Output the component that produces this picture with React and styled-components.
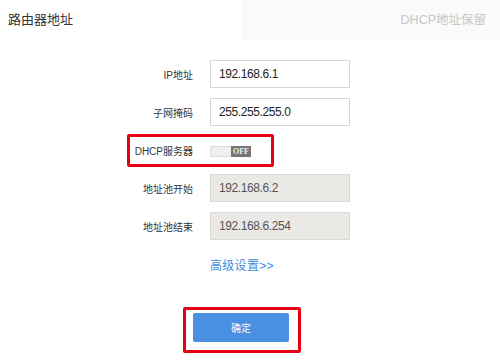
import React from 'react';
import styled, { createGlobalStyle } from 'styled-components';

const GlobalStyle = createGlobalStyle`
  html, body {
    margin: 0;
    padding: 0;
    background: #fff;
  }
  body {
    font-family: "Liberation Sans", "Noto Sans CJK SC", sans-serif;
    color: #333;
  }
`;

const Page = styled.div`
  width: 500px;
  height: 361px;
  overflow: hidden;
`;

const Header = styled.div`
  display: flex;
  height: 40px;
`;

const Title = styled.div`
  width: 241px;
  padding-left: 8px;
  box-sizing: border-box;
  font-size: 13px;
  line-height: 40px;
  color: #333;
`;

const Tab = styled.div`
  flex: 1;
  background: #fafafa;
  text-align: right;
  padding-right: 14px;
  font-size: 12.5px;
  line-height: 40px;
  color: #c6c6c6;
`;

const Form = styled.div`
  padding-top: 20px;
`;

const Row = styled.div`
  position: relative;
  display: grid;
  grid-template-columns: 193px 140px;
  column-gap: 17px;
  align-items: center;
  height: 28px;
  margin-bottom: 10px;
`;

const Label = styled.label`
  text-align: right;
  font-size: 10px;
  color: #333;
`;

const Field = styled.input`
  box-sizing: border-box;
  width: 140px;
  height: 28px;
  margin: 0;
  padding: 0 0 0 8px;
  border: 1px solid ${(p) => (p.disabled ? '#d9d9d6' : '#d6d6d6')};
  border-radius: 0;
  background: ${(p) => (p.disabled ? '#ebe9e5' : '#fff')};
  font-family: "Liberation Sans", sans-serif;
  font-size: 12px;
  letter-spacing: -0.4px;
  color: ${(p) => (p.disabled ? '#555' : '#222')};
  -webkit-text-fill-color: ${(p) => (p.disabled ? '#555' : '#222')};
  opacity: 1;
  outline: none;
`;

const Toggle = styled.div`
  display: flex;
  width: 41px;
  height: 11px;
  margin-top: 2px;
`;

const ToggleOff = styled.span`
  flex: 1;
  box-sizing: border-box;
  background: #efefef;
  border: 1px solid #dcdcdc;
  border-right: none;
`;

const ToggleLabel = styled.span`
  width: 20px;
  background: #767676;
  color: #eee;
  font-family: "Liberation Serif", serif;
  font-weight: bold;
  font-size: 8px;
  line-height: 11px;
  text-align: center;
`;

const Mark = styled.div`
  position: absolute;
  left: 127px;
  top: -2px;
  width: 147px;
  height: 33px;
  box-sizing: border-box;
  border: 3px solid #e60012;
  border-radius: 2px;
  pointer-events: none;
`;

const MoreLink = styled.a`
  display: block;
  margin: 18px 0 0 210px;
  width: max-content;
  font-size: 12px;
  line-height: 16px;
  color: #3a8ddb;
  text-decoration: none;
  letter-spacing: 0.3px;
`;

const ButtonMark = styled.div`
  margin: 33px 0 0 183px;
  width: max-content;
  padding: 3px 9px 8px 7px;
  border: 3px solid #e60012;
  border-radius: 2px;
`;

const Button = styled.button`
  display: block;
  width: 96px;
  height: 29px;
  border: none;
  border-radius: 2px;
  background: #4a90e2;
  color: #fff;
  font-family: "Noto Sans CJK SC", sans-serif;
  font-size: 10px;
  cursor: pointer;
`;

const fields = [
  { label: 'IP地址', value: '192.168.6.1' },
  { label: '子网掩码', value: '255.255.255.0' },
];

const pool = [
  { label: '地址池开始', value: '192.168.6.2' },
  { label: '地址池结束', value: '192.168.6.254' },
];

export default function App() {
  return (
    <Page>
      <GlobalStyle />
      <Header>
        <Title>路由器地址</Title>
        <Tab>DHCP地址保留</Tab>
      </Header>
      <Form>
        {fields.map((f) => (
          <Row key={f.label}>
            <Label>{f.label}</Label>
            <Field defaultValue={f.value} />
          </Row>
        ))}
        <Row>
          <Label>DHCP服务器</Label>
          <Toggle>
            <ToggleOff />
            <ToggleLabel>OFF</ToggleLabel>
          </Toggle>
          <Mark />
        </Row>
        {pool.map((f) => (
          <Row key={f.label}>
            <Label>{f.label}</Label>
            <Field defaultValue={f.value} disabled />
          </Row>
        ))}
        <MoreLink href="#">高级设置&gt;&gt;</MoreLink>
        <ButtonMark>
          <Button>确定</Button>
        </ButtonMark>
      </Form>
    </Page>
  );
}
